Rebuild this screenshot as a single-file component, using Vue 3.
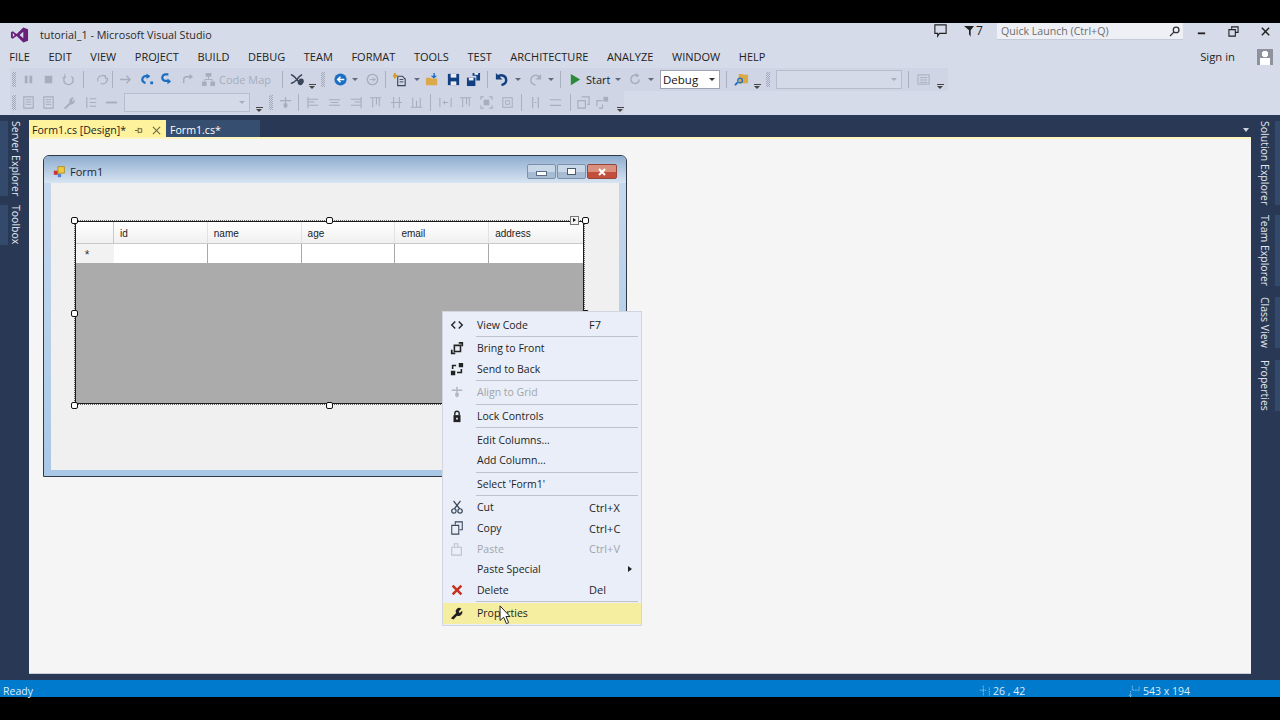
<script setup>
const DIM = '#a6adbd'
const DARK = '#3a4658'
const BLUE = '#1b6ec2'
const NAVY = '#123f80'

// each shape: [colour, path, stroke width (fill when left out)]
const icons = {
  pause: [[DIM, 'M4 4h3v8H4zM9 4h3v8H9z']],
  stop: [[DIM, 'M4 4h8v8H4z']],
  restart: [[DIM, 'M5 4.5a5 5 0 1 0 6 0', 1.5], [DIM, 'M4 2v4H1', 1]],
  hot: [[DIM, 'M3 10a5 5 0 0 1 9-4M13 6a5 5 0 0 1-7 6', 1.2], [DIM, 'M11 3v4h3', 1]],
  arrow: [[DIM, 'M2 8h11M9 4l4 4-4 4', 1.4]],
  stepOver: [[BLUE, 'M11 4.5H7a3.5 3.5 0 0 0 0 7', 2.4], [BLUE, 'M8 1.5l4 3-4 3zM12 10h3v3h-3z']],
  stepInto: [[BLUE, 'M10 2.5H7a3.5 3.5 0 0 0 0 7h4', 2.4], [BLUE, 'M9 7l4 3-4 3z']],
  stepOut: [[DIM, 'M4 12V8a3 3 0 0 1 3-3h5', 1.5], [DIM, 'M10 2l4 3-4 3z']],
  codeMap: [[DIM, 'M5 1h6v4H5zM1 10h5v5H1zM10 10h5v5h-5z'], [DIM, 'M8 5v3M4 10V8h8v2', 1]],
  cross: [[DARK, 'M2 3c4 0 7 8 12 9M2 12c5 0 8-8 12-9', 1.6], [DARK, 'M10 9a3 3 0 1 0 5 3 3 3 0 1 0-5-3z']],
  back: [[BLUE, 'M8 1.5a6.5 6.5 0 1 0 0 13 6.5 6.5 0 0 0 0-13z'], ['#fff', 'M12 8H5M8 5L5 8l3 3', 1.6]],
  forward: [[DIM, 'M8 2.5a5.5 5.5 0 1 0 0 11 5.5 5.5 0 0 0 0-11z', 1.5], [DIM, 'M5 8h6M8 6l3 2-3 2', 1]],
  newProj: [[DARK, 'M5 4.5h5l3 3v7H5z', 1.2], ['#d89a2c', 'M1 1h2v2h2v2H3v2H1V5H0V3h1z'], [DARK, 'M7 8h4M7 10.5h4', 1]],
  open: [['#dca94a', 'M1 6h5l1 1h6v7H1z'], ['#1b6ec2', 'M9 1v3H6l3.5 3L13 4h-2.5V1z']],
  save: [[NAVY, 'M2 2h12v12H2z'], ['#e9ecf4', 'M5 2h6v4H5z'], ['#e9ecf4', 'M5 10h6v4H5z']],
  saveAll: [[NAVY, 'M1 6h9v9H1z'], ['#e9ecf4', 'M3 6h5v3H3z'], [NAVY, 'M7 1h8v8h-4V4H7z'], ['#e9ecf4', 'M9 1h4v2H9z']],
  undo: [[NAVY, 'M3 6c3-4 10-3 10 3 0 3-2 4-5 5', 2.6], [NAVY, 'M2 1v7h7z']],
  redo: [[DIM, 'M13 6C10 2 3 3 3 9c0 3 2 4 5 5', 1.5], [DIM, 'M14 2v6H8z']],
  start: [['#2c8a3a', 'M3 2l10 6-10 6z']],
  reload: [[DIM, 'M12 8a4.5 4.5 0 1 1-2-4', 1.6], [DIM, 'M8 1l4 2.5L9 6z']],
  find: [['#dca94a', 'M5 2h4l1 1h5v9H5z'], [BLUE, 'M1 14l3-3', 2], [BLUE, 'M6.5 6.5a2.5 2.5 0 1 0 0 5 2.5 2.5 0 0 0 0-5z', 1.4]],
  listing: [[DIM, 'M2 3h12v10H2zM4 6h8M4 8.5h8M4 11h8', 1]],
  doc: [[DIM, 'M3 2h10v12H3z', 1.2], [DIM, 'M5 5h6M5 7.5h6M5 10h6', 1]],
  wrench: [[DIM, 'M3 14l6-6a4 4 0 0 1 5-5l-2.5 2.5 1 1.5 2-2.5A4 4 0 0 1 10 10l-5 5z']],
  tabs: [[DIM, 'M3 2v12M6 4h7M6 8h7M6 12h7', 1.2]],
  dash: [[DIM, 'M2 7h12v2H2z']],
  gridSnap: [[DIM, 'M8 2v12M2 6h12', 1.3], [DIM, 'M6 9h4v4H6z']],
  alignL: [[DIM, 'M2 2v12M2 4.5h11M2 7.5h7M2 11h11', 1.1]],
  alignC: [[DIM, 'M2 5h12M4 8h8M2 11h12', 1.1]],
  alignR: [[DIM, 'M14 2v12M3 4.5h11M7 7.5h7M3 11h11', 1.1]],
  alignT: [[DIM, 'M2 3h12M5 3v10M9 3v7M12 3v9', 1.1]],
  alignM: [[DIM, 'M5 2v12M11 2v12M2 8h12', 1.1]],
  alignB: [[DIM, 'M2 13h12M4 3v10M8 6v7M12 3v10', 1.1]],
  spaceH: [[DIM, 'M2 3v10M14 3v10M5 8h6M7 6v4', 1.1]],
  fit: [[DIM, 'M2 5V2h3M11 2h3v3M14 11v3h-3M5 14H2v-3', 1.1], [DIM, 'M5 5h6v6H5z']],
  center: [[DIM, 'M3 3h10v10H3z', 1.1], [DIM, 'M6 6h4v4H6z', 1]],
  eqH: [[DIM, 'M5 2v12M11 2v12M7 8h2', 1.2]],
  eqV: [[DIM, 'M2 5h12M2 11h12', 1.2]],
  toFront: [[DIM, 'M6 2h8v8h-2M2 6h8v8H2z', 1.2]],
  toBack: [[DIM, 'M2 12v-6h6M8 10v4H4', 1.2], [DIM, 'M9 2h5v5H9z']],
  menuCode: [['#222', 'M6 4L2 8l4 4M10 4l4 4-4 4', 1.6]],
  menuFront: [['#222', 'M5 5h7v7H5z', 1.8], ['#222', 'M10 1h5v5h-2V3h-3zM1 10h2v3h3v2H1z']],
  menuBack: [['#222', 'M1 10h5v5H1zM10 1h5v5h-5z'], ['#222', 'M3 8V4h4M13 8v4H8', 1.8]],
  menuGrid: [['#b0b6c2', 'M8 2v12M2 6h12', 1.6], ['#b0b6c2', 'M6 9h4v4H6z']],
  menuLock: [['#222', 'M4 7h8v8H4z'], ['#222', 'M5.5 7V5a2.5 2.5 0 0 1 5 0v2', 1.6], ['#e9eef8', 'M7 10h2v2H7z']],
  menuCut: [['#3a4658', 'M4 1l7 9M12 1L5 10', 1.4], ['#3a4658', 'M4.5 10a2.5 2.5 0 1 0 0 5 2.5 2.5 0 0 0 0-5zM11.5 10a2.5 2.5 0 1 0 0 5 2.5 2.5 0 0 0 0-5z', 1.4]],
  menuCopy: [['#3a4658', 'M6 4V1h8v9h-3M2 5h8v10H2z', 1.2]],
  menuPaste: [['#bcc2ce', 'M2 6h11v9H2zM5 6V2h4v4', 1.2]],
  menuDelete: [['#c8301f', 'M2 4l2-2 4 4 4-4 2 2-4 4 4 4-2 2-4-4-4 4-2-2 4-4z']],
  menuProps: [['#222', 'M1 14l6-6a4 4 0 0 1 6-5l-3 3 1 2 3-2.5A4.5 4.5 0 0 1 8 11l-4 4.5z']],
}

const ic = (name, w) => ({ kind: 'icon', name, w })
const sp = (kind, w) => ({ kind, w })
const tx = (text, w, dark = false) => ({ kind: 'text', text, w, dark })
const box = (w, text = '') => ({ kind: 'combo', w, text })

const toolbarOne = [
  sp('grip', 8), ic('pause', 20), ic('stop', 20), ic('restart', 21), sp('sep', 8), sp('gap', 5),
  ic('hot', 20), sp('sep', 1), ic('arrow', 24), ic('stepOver', 18), ic('stepInto', 22), ic('stepOut', 20),
  ic('codeMap', 22), tx('Code Map', 57), sp('sep', 12), ic('cross', 16), sp('more', 16), sp('grip', 6), sp('gap', 4),
  ic('back', 20), sp('drop', 10), ic('forward', 24), sp('sep', 2), ic('newProj', 28), sp('drop', 6), ic('open', 24),
  ic('save', 18), ic('saveAll', 22), sp('sep', 6), ic('undo', 22), sp('drop', 12), ic('redo', 22), sp('drop', 10),
  sp('sep', 8), ic('start', 22), tx('Start', 25, true), sp('drop', 14), ic('reload', 20), sp('drop', 12), sp('gap', 3),
  box(60, 'Debug'), sp('sep', 12), ic('find', 18), sp('more', 14), sp('grip', 8), sp('gap', 4), box(126),
  sp('sep', 12), ic('listing', 18), sp('more', 16),
]

const toolbarTwo = [
  sp('grip', 8), ic('doc', 20), ic('doc', 20), ic('wrench', 21), ic('tabs', 24), ic('dash', 16), sp('gap', 5),
  box(126), sp('more', 18), sp('grip', 6), ic('gridSnap', 22), sp('sep', 4), ic('alignL', 26), ic('alignC', 16),
  ic('alignR', 26), ic('alignT', 14), ic('alignM', 28), ic('alignB', 12), sp('sep', 16), ic('spaceH', 14),
  ic('alignT', 26), ic('fit', 16), ic('center', 26), sp('sep', 2), ic('eqH', 26), ic('eqV', 14), sp('sep', 16),
  ic('toFront', 10), ic('toBack', 28), sp('more', 8),
]

const menuBar = ['FILE', 'EDIT', 'VIEW', 'PROJECT', 'BUILD', 'DEBUG', 'TEAM', 'FORMAT', 'TOOLS', 'TEST', 'ARCHITECTURE', 'ANALYZE', 'WINDOW', 'HELP']
const columns = ['id', 'name', 'age', 'email', 'address']
const handles = ['tl', 'tc', 'tr', 'ml', 'mr', 'bl', 'bc']

const contextMenu = [
  { icon: 'menuCode', label: 'View Code', key: 'F7' },
  { sep: true },
  { icon: 'menuFront', label: 'Bring to Front' },
  { icon: 'menuBack', label: 'Send to Back' },
  { sep: true },
  { icon: 'menuGrid', label: 'Align to Grid', off: true },
  { sep: true },
  { icon: 'menuLock', label: 'Lock Controls' },
  { sep: true },
  { label: 'Edit Columns...' },
  { label: 'Add Column...' },
  { sep: true },
  { label: "Select 'Form1'" },
  { sep: true },
  { icon: 'menuCut', label: 'Cut', key: 'Ctrl+X' },
  { icon: 'menuCopy', label: 'Copy', key: 'Ctrl+C' },
  { icon: 'menuPaste', label: 'Paste', key: 'Ctrl+V', off: true },
  { label: 'Paste Special', more: true },
  { icon: 'menuDelete', label: 'Delete', key: 'Del' },
  { sep: true },
  { icon: 'menuProps', label: 'Properties', active: true },
]
</script>

<template>
  <div class="app">
    <div class="chrome">
      <div class="title-row">
        <svg class="logo" viewBox="0 0 20 16">
          <path fill="#68217a" fill-rule="evenodd" d="M14 0l5 2v12l-5 2-7-7-4 3-2-1V5l2-1 4 3zM14 4.5L10 8l4 3.5zM3 6v4l2-2z" />
        </svg>
        <span class="title">tutorial_1 - Microsoft Visual Studio</span>
        <div class="title-right">
          <svg class="chat" viewBox="0 0 16 16">
            <path fill="none" stroke="#222" stroke-width="1.2" d="M2 2h12v9H7l-2 3v-3H2z" />
          </svg>
          <svg class="funnel" viewBox="0 0 12 14">
            <path fill="#222" d="M0 1h12L8 6v8L6 11V6z" />
          </svg>
          <span class="count">7</span>
          <div class="quick">
            <span>Quick Launch (Ctrl+Q)</span>
            <svg viewBox="0 0 16 16">
              <path fill="none" stroke="#333" stroke-width="1.6" d="M10 2.5a3.5 3.5 0 1 0 0 7 3.5 3.5 0 0 0 0-7zM7.5 8.5L2.5 13.5" />
            </svg>
          </div>
          <div class="caption">
            <svg viewBox="0 0 12 12"><path fill="#222" d="M2 7h8v2H2z" /></svg>
            <svg viewBox="0 0 12 12"><path fill="none" stroke="#222" stroke-width="1.2" d="M4 3V1h7v6H8M1 4h7v7H1z" /></svg>
            <svg viewBox="0 0 12 12"><path fill="none" stroke="#222" stroke-width="1.6" d="M2 2l8 8M10 2l-8 8" /></svg>
          </div>
        </div>
      </div>

      <div class="menu-row">
        <span v-for="item in menuBar" :key="item" class="menu-item">{{ item }}</span>
        <span class="sign-in">Sign in</span>
        <div class="avatar"></div>
      </div>

      <div v-for="(row, r) in [toolbarOne, toolbarTwo]" :key="r" class="toolbar">
        <div v-for="(item, i) in row" :key="i" :class="['tb', `tb--${item.kind}`, { 'tb--dark': item.dark, 'tb--debug': item.text === 'Debug' }]" :style="{ width: item.w + 'px' }">
          <svg v-if="item.kind === 'icon'" viewBox="0 0 16 16">
            <path
              v-for="(shape, s) in icons[item.name]"
              :key="s"
              :d="shape[1]"
              :fill="shape[2] ? 'none' : shape[0]"
              :stroke="shape[2] ? shape[0] : 'none'"
              :stroke-width="shape[2] || 0"
            />
          </svg>
          <template v-else-if="item.kind === 'text'">{{ item.text }}</template>
          <template v-else-if="item.kind === 'combo'">
            <span>{{ item.text }}</span>
            <i class="combo-arrow"></i>
          </template>
        </div>
      </div>
    </div>

    <div class="main">
      <div class="rail rail--left">
        <span class="rail-tab rail-tab--server">Server Explorer</span>
        <span class="rail-tab">Toolbox</span>
      </div>

      <div class="center">
        <div class="tabs">
          <div class="tab tab--active">
            <span>Form1.cs [Design]*</span>
            <svg class="pin" viewBox="0 0 10 10">
              <path fill="none" stroke="#5c5a33" d="M0 5h3M3.5 2v6M3.5 3h4v4h-4" />
            </svg>
            <svg class="tab-close" viewBox="0 0 10 10">
              <path fill="none" stroke="#6a6840" stroke-width="1.2" d="M1 1l8 8M9 1l-8 8" />
            </svg>
          </div>
          <div class="tab">Form1.cs*</div>
          <i class="tabs-arrow"></i>
        </div>

        <div class="content">
          <div class="form">
            <div class="form-title">
              <svg class="form-icon" viewBox="0 0 16 16">
                <path fill="#c33" d="M1 7h5v5H1z" />
                <path fill="#4f7fd0" d="M6 11h4v4H6z" />
                <path fill="#f0c93c" stroke="#a88a1c" d="M6 2h8v8H6z" />
              </svg>
              <span>Form1</span>
              <div class="form-btns">
                <div class="form-btn form-btn--min"><i></i></div>
                <div class="form-btn form-btn--max"><i></i></div>
                <div class="form-btn form-btn--close">
                  <svg viewBox="0 0 10 10"><path fill="none" stroke="#fff" stroke-width="2" d="M2 2l6 6M8 2l-6 6" /></svg>
                </div>
              </div>
            </div>
            <div class="form-client">
              <div class="selection">
                <div class="grid">
                  <div class="grid-row grid-row--head">
                    <div class="row-head"></div>
                    <div v-for="col in columns" :key="col" class="cell">{{ col }}</div>
                  </div>
                  <div class="grid-row grid-row--body">
                    <div class="row-head"><i class="star">*</i></div>
                    <div v-for="col in columns" :key="col" class="cell"></div>
                  </div>
                </div>
                <i v-for="h in handles" :key="h" :class="['handle', `handle--${h}`]"></i>
                <i class="smart-tag"></i>
              </div>
            </div>
          </div>
        </div>
      </div>

      <div class="rail rail--right">
        <span class="rail-tab rail-tab--solution">Solution Explorer</span>
        <span class="rail-tab rail-tab--team">Team Explorer</span>
        <span class="rail-tab rail-tab--class">Class View</span>
        <span class="rail-tab">Properties</span>
      </div>
    </div>

    <div class="status">
      <span class="ready">Ready</span>
      <div class="status-cell status-cell--pos">
        <svg viewBox="0 0 14 14">
          <path fill="none" stroke="#cfe6f6" stroke-dasharray="1 1" d="M5 1v12M1 6h8M12 3v10" />
        </svg>
        <span>26 , 42</span>
      </div>
      <div class="status-cell status-cell--size">
        <svg viewBox="0 0 14 14">
          <path fill="none" stroke="#cfe6f6" stroke-dasharray="1 1" d="M5 1v5h8V1M3 7v7M1 12h4" />
        </svg>
        <span>543 x 194</span>
      </div>
    </div>

    <div class="context-menu">
      <template v-for="(row, i) in contextMenu" :key="i">
        <div v-if="row.sep" class="cm-sep"></div>
        <div v-else :class="['cm-row', { 'cm-row--off': row.off, 'cm-row--active': row.active }]">
          <div class="cm-icon">
            <svg v-if="row.icon" viewBox="0 0 16 16">
              <path
                v-for="(shape, s) in icons[row.icon]"
                :key="s"
                :d="shape[1]"
                :fill="shape[2] ? 'none' : shape[0]"
                :stroke="shape[2] ? shape[0] : 'none'"
                :stroke-width="shape[2] || 0"
              />
            </svg>
          </div>
          <span class="cm-label">{{ row.label }}</span>
          <span class="cm-key">{{ row.key }}</span>
          <i v-if="row.more" class="cm-more"></i>
        </div>
      </template>
    </div>

    <svg class="cursor" viewBox="0 0 14 22">
      <path fill="#fff" stroke="#111" d="M1 1v16l4-3.5 3 7 2.5-1-3-6.8H12z" />
    </svg>
  </div>
</template>

<style>
html,
body {
  margin: 0;
  background: #000;
}
</style>

<style scoped>
.app {
  position: relative;
  width: 1280px;
  height: 720px;
  box-sizing: border-box;
  padding: 23px 0;
  display: flex;
  flex-direction: column;
  background: #000;
  color: #1e1e1e;
  font-family: "Open Sans", "Liberation Sans", sans-serif;
  font-size: 11px;
  overflow: hidden;
}

/* top chrome */
.chrome {
  background: #d6dbe9;
  height: 92px;
  flex: none;
}

.title-row {
  height: 22px;
  display: flex;
  align-items: center;
  padding-left: 10px;
}

.logo {
  width: 19px;
  height: 16px;
  margin-top: 2px;
}

.title {
  margin-left: 11px;
  font-size: 10.8px;
  color: #2a2a2a;
}

.title-right {
  margin-left: auto;
  display: flex;
  align-items: flex-start;
  height: 100%;
}

.chat {
  width: 15px;
  height: 15px;
  margin-right: 16px;
  margin-top: 0;
}

.funnel {
  width: 10px;
  height: 12px;
  margin-top: 2px;
}

.count {
  width: 23px;
  font-size: 12px;
  line-height: 16px;
  padding-left: 2px;
  box-sizing: border-box;
}

.quick {
  width: 186px;
  height: 17px;
  background: #eef0f6;
  border-bottom: 1px solid #c5cad8;
  box-sizing: border-box;
  display: flex;
  align-items: center;
  justify-content: space-between;
  padding: 0 2px 0 4px;
  color: #6d6d6d;
  font-size: 10.6px;
}

.quick svg {
  width: 13px;
  height: 13px;
}

.caption {
  width: 97px;
  display: flex;
  gap: 21px;
  padding: 3px 0 0 13px;
  box-sizing: border-box;
}

.caption svg {
  width: 11px;
  height: 11px;
}

.menu-row {
  height: 23px;
  display: flex;
  align-items: center;
  font-size: 11px;
}

.menu-item {
  padding: 0 9.3px;
  color: #222;
}

.sign-in {
  margin-left: auto;
  font-size: 11.3px;
}

.avatar {
  width: 16px;
  height: 16px;
  margin: 0 7px 0 22px;
  background:
    radial-gradient(circle at 50% 32%, #fff 0 3px, transparent 3.5px),
    linear-gradient(transparent 58%, #fff 58%) no-repeat 50% 100% / 10px 100%,
    #8d929d;
}

/* toolbars */
.toolbar {
  display: flex;
  align-items: center;
  height: 23px;
  margin-left: 10px;
  background: #cfd5e4;
  width: max-content;
  color: #a6adbd;
}

.tb {
  flex: none;
  height: 100%;
  display: flex;
  align-items: center;
  justify-content: center;
  position: relative;
}

.tb svg {
  width: 15px;
  height: 15px;
  flex: none;
}

.tb--text {
  justify-content: flex-start;
  white-space: nowrap;
  font-size: 11px;
}

.tb--dark {
  color: #222;
}

.tb--grip::before {
  content: "";
  width: 4px;
  height: 15px;
  background: repeating-conic-gradient(#a3a9b8 0 25%, transparent 0 50%) 0 0 / 2px 2px;
}

.tb--sep::before {
  content: "";
  width: 1px;
  height: 17px;
  flex: none;
  background: #aab0bf;
}

.tb--drop::before {
  content: "";
  border: 3px solid transparent;
  border-top-color: #606a7c;
  border-bottom: 0;
  flex: none;
}

.tb--more::before {
  content: "";
  position: absolute;
  left: 50%;
  margin-left: -3px;
  bottom: 4px;
  width: 7px;
  height: 2px;
  border-top: 1px solid #444;
}

.tb--more::after {
  content: "";
  position: absolute;
  left: 50%;
  margin-left: -3px;
  bottom: 1px;
  border: 3.5px solid transparent;
  border-top-color: #444;
  border-bottom: 0;
  margin-bottom: 0;
  transform: translateY(-1px);
}

.tb--combo {
  height: 19px;
  box-sizing: border-box;
  border: 1px solid #b8bdcb;
  background: #d5dae8;
  justify-content: space-between;
  padding: 0 4px 0 2px;
}

.tb--debug {
  background: #fff;
  color: #111;
  font-size: 11.5px;
  border-color: #9da3b2;
}

.combo-arrow {
  border: 3px solid transparent;
  border-top-color: #a6adbd;
  border-bottom: 0;
}

.tb--debug .combo-arrow {
  border-top-color: #333;
}

/* middle */
.main {
  flex: 1;
  min-height: 0;
  display: flex;
  background: #293955;
}

.rail {
  width: 29px;
  flex: none;
  display: flex;
  flex-direction: column;
  color: #e4e9f2;
  font-size: 10.5px;
  padding-top: 6px;
  box-sizing: border-box;
}

.rail-tab {
  writing-mode: vertical-rl;
  line-height: 13px;
  white-space: nowrap;
}

.rail--left .rail-tab {
  border-left: 8px solid #334a6d;
  padding-left: 1px;
  width: 22px;
  box-sizing: border-box;
}

.rail-tab--server {
  margin-bottom: 9px;
}

.rail--right {
  align-items: flex-end;
}

.rail--right .rail-tab {
  border-right: 5px solid #334a6d;
  padding-right: 4px;
}

.rail-tab--solution {
  margin-bottom: 10px;
}

.rail-tab--team {
  margin-bottom: 11px;
}

.rail-tab--class {
  margin-bottom: 12px;
}

.center {
  flex: 1;
  min-width: 0;
  display: flex;
  flex-direction: column;
  padding-bottom: 6px;
}

.tabs {
  height: 22px;
  flex: none;
  display: flex;
  align-items: flex-end;
  position: relative;
}

.tab {
  height: 17px;
  width: 94px;
  box-sizing: border-box;
  padding-left: 4px;
  line-height: 20px;
  background: #364e6f;
  color: #fff;
  font-size: 10.6px;
  white-space: nowrap;
}

.tab--active {
  width: 137px;
  padding: 3px 0 0 3px;
  background: #fff29d;
  color: #222;
  display: flex;
  align-items: center;
  line-height: 14px;
}

.pin {
  width: 9px;
  height: 9px;
  margin-left: 9px;
  flex: none;
}

.tab-close {
  width: 9px;
  height: 9px;
  margin-left: 8px;
  flex: none;
}

.tabs-arrow {
  position: absolute;
  right: 2px;
  top: 13px;
  border: 3.5px solid transparent;
  border-top: 4px solid #ced4df;
  border-bottom: 0;
}

.content {
  flex: 1;
  min-height: 0;
  background: #f5f5f6;
  border-top: 2px solid #fdf5bd;
  border-bottom: 1px solid #c9cedb;
  padding: 16px 14px;
  box-sizing: border-box;
}

/* designer form */
.form {
  width: 584px;
  height: 322px;
  box-sizing: border-box;
  border: 1px solid #303a46;
  border-radius: 6px 6px 0 0;
  background: linear-gradient(#c8d9ee, #a9c8e6);
  display: flex;
  flex-direction: column;
  padding: 0 7px 6px;
}

.form-title {
  height: 27px;
  flex: none;
  margin: 0 -7px;
  padding: 4px 9px 0;
  box-sizing: border-box;
  display: flex;
  align-items: center;
  border-radius: 5px 5px 0 0;
  background: linear-gradient(#8fadcf, #d7e4f2);
  font-size: 11px;
  color: #1d2733;
}

.form-icon {
  width: 13px;
  height: 13px;
  margin-right: 4px;
}

.form-btns {
  margin-left: auto;
  display: flex;
  gap: 1px;
}

.form-btn {
  width: 29px;
  height: 15px;
  box-sizing: border-box;
  border: 1px solid #7c92aa;
  border-radius: 2px;
  background: linear-gradient(#c8d7e7 50%, #a7bcd3 50%);
  display: flex;
  align-items: center;
  justify-content: center;
}

.form-btn--min i {
  width: 9px;
  height: 3px;
  margin-top: 3px;
  border: 1px solid #5b6d82;
  background: #fff;
}

.form-btn--max i {
  width: 7px;
  height: 5px;
  border: 1px solid #4a5b70;
  background: #fff;
}

.form-btn--close {
  width: 30px;
  border-color: #96473a;
  background: linear-gradient(#d9907f 50%, #c24f3b 50%);
}

.form-btn--close svg {
  width: 10px;
  height: 10px;
}

.form-client {
  flex: 1;
  background: #f0f0f0;
  padding: 37px 0 0 23px;
}

.selection {
  position: relative;
  width: 511px;
  height: 185px;
  box-sizing: border-box;
  border: 1px dotted #666;
}

.grid {
  height: 100%;
  box-sizing: border-box;
  border: 1px solid #1c1c1c;
  background: #ababab;
  font-family: "Liberation Sans", Arial, sans-serif;
  font-size: 10px;
}

.grid-row {
  display: flex;
}

.grid-row--head {
  height: 22px;
  background: linear-gradient(#fff, #f0f0f0);
  border-bottom: 1px solid #c9c9c9;
  box-sizing: border-box;
}

.grid-row--body {
  height: 19px;
  background: #fff;
}

.row-head {
  width: 38px;
  flex: none;
  display: flex;
  align-items: center;
  justify-content: center;
  border-right: 1px solid #c9c9c9;
  box-sizing: border-box;
}

.grid-row--body .row-head {
  background: #f2f2f2;
  border-right: 0;
}

.star {
  font-style: normal;
  color: #333;
  font-size: 12px;
  margin: 3px 16px 0 0;
}

.cell {
  width: 94px;
  box-sizing: border-box;
  padding-left: 6px;
  line-height: 23px;
  color: #222;
}

.grid-row--head .cell {
  border-right: 1px solid #e2e2e2;
}

.grid-row--body .cell {
  border-right: 1px solid #a9a9a9;
}

.grid-row .cell:last-child {
  border-right: 0;
}

.handle {
  position: absolute;
  width: 7px;
  height: 7px;
  box-sizing: border-box;
  border: 1px solid #111;
  border-radius: 2px;
  background: #fff;
}

.handle--tl { left: -4px; top: -4px; }
.handle--tc { left: 251px; top: -4px; }
.handle--tr { right: -5px; top: -4px; }
.handle--ml { left: -4px; top: 89px; }
.handle--mr { right: -5px; top: 89px; }
.handle--bl { left: -4px; bottom: -5px; }
.handle--bc { left: 251px; bottom: -5px; }

.smart-tag {
  position: absolute;
  right: 5px;
  top: -5px;
  width: 9px;
  height: 9px;
  box-sizing: border-box;
  border: 1px solid #777;
  background: #f4f4f4;
}

.smart-tag::after {
  content: "";
  position: absolute;
  left: 2px;
  top: 1px;
  border: 2.5px solid transparent;
  border-left: 3px solid #111;
  border-right: 0;
}

/* status bar */
.status {
  height: 17px;
  flex: none;
  background: #007acc;
  color: #dcedf8;
  display: flex;
  align-items: center;
  font-size: 10.5px;
  padding-top: 4px;
  box-sizing: border-box;
}

.ready {
  padding-left: 3px;
}

.status-cell {
  display: flex;
  align-items: center;
  gap: 2px;
}

.status-cell svg {
  width: 12px;
  height: 12px;
}

.status-cell--pos {
  margin-left: auto;
  width: 148px;
  padding-left: 1px;
  box-sizing: border-box;
}

.status-cell--size {
  width: 154px;
  padding-left: 2px;
  gap: 3px;
  box-sizing: border-box;
}

/* right-click menu */
.context-menu {
  position: absolute;
  left: 443px;
  top: 312px;
  width: 198px;
  height: 313px;
  box-sizing: border-box;
  padding-top: 2.4px;
  background: #e9eef8;
  box-shadow: 0 0 0 1px #d0d5e0;
  font-size: 10.5px;
}

.cm-row {
  height: 20.6px;
  display: flex;
  align-items: center;
  color: #1e1e1e;
}

.cm-row--off {
  color: #a2a5ab;
}

.cm-row--active {
  background: #f5eda0;
}

.cm-icon {
  width: 34px;
  flex: none;
  display: flex;
  justify-content: center;
  padding-right: 6px;
  box-sizing: border-box;
}

.cm-icon svg {
  width: 14px;
  height: 14px;
}

.cm-label {
  width: 112px;
  flex: none;
  white-space: nowrap;
}

.cm-key {
  font-size: 11px;
}

.cm-more {
  margin-left: auto;
  margin-right: 9px;
  border: 3px solid transparent;
  border-left: 4px solid #222;
  border-right: 0;
}

.cm-sep {
  height: 1px;
  margin: 1px 3px 1px 33px;
  background: #bcc2cf;
}

.cursor {
  position: absolute;
  left: 499px;
  top: 605px;
  width: 13px;
  height: 20px;
}
</style>
